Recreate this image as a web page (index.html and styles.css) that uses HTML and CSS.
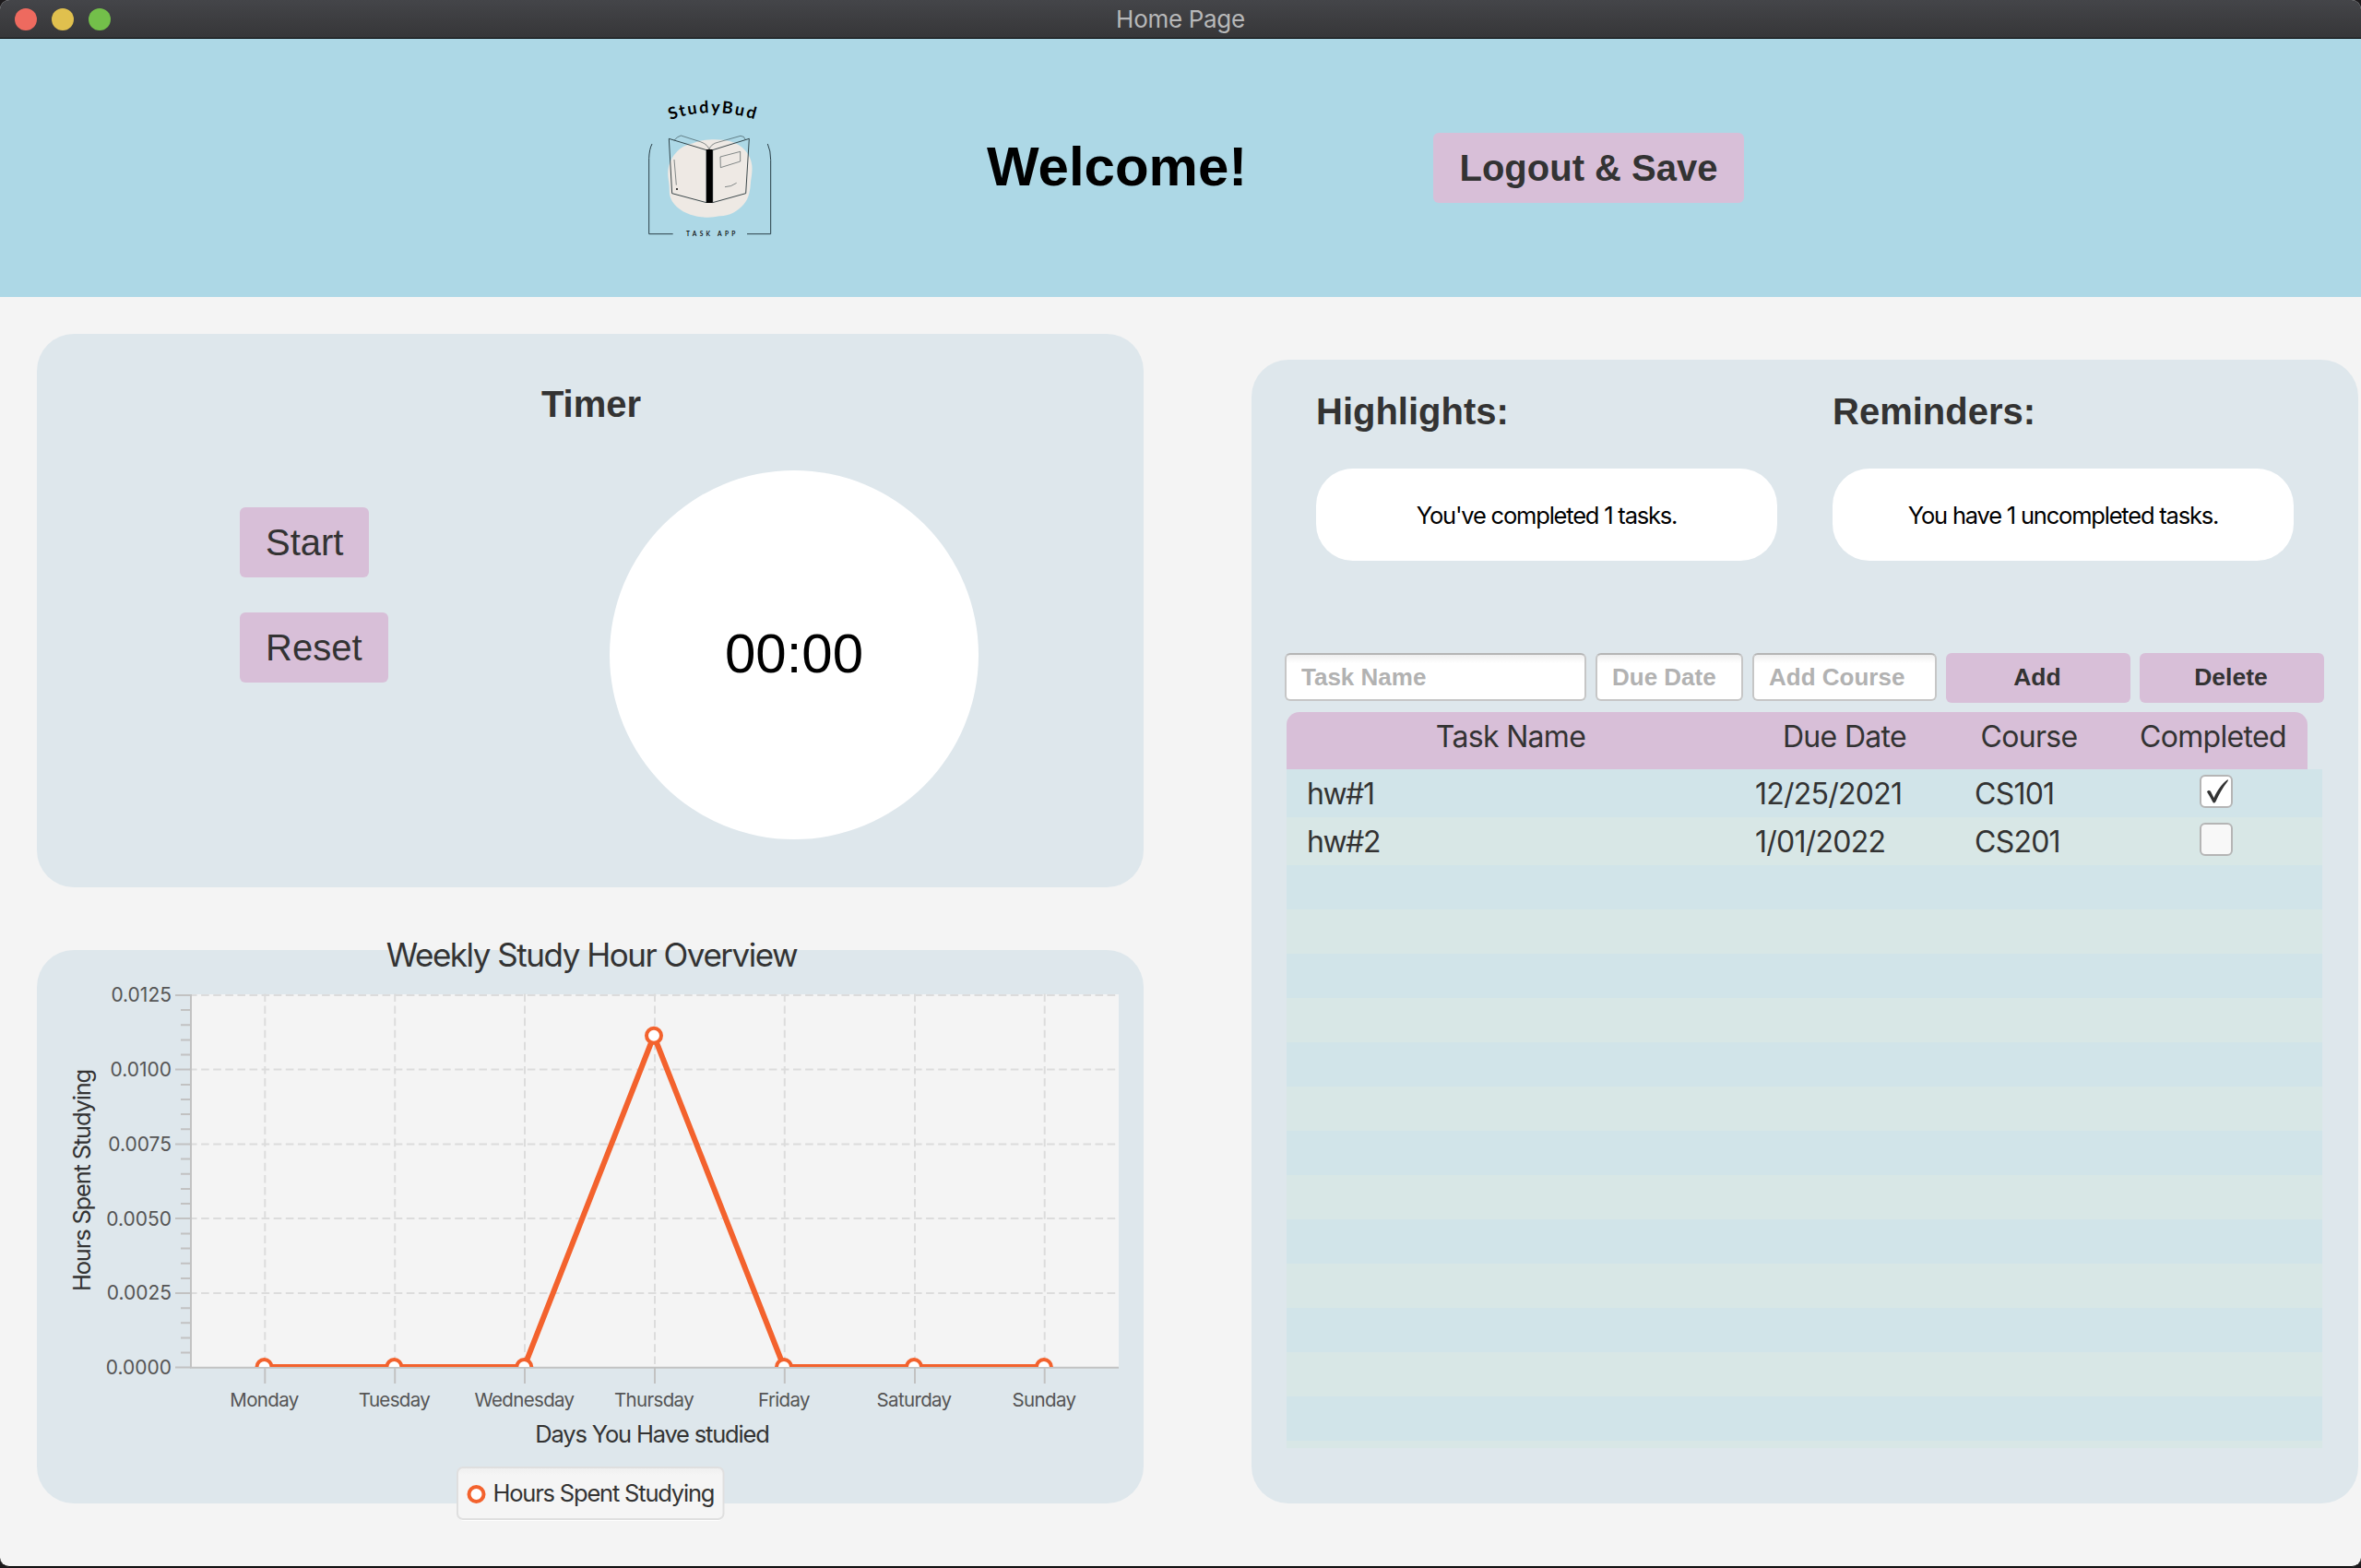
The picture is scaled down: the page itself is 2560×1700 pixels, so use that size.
FILE: index.html
```html
<!DOCTYPE html>
<html lang="en">
<head>
<meta charset="utf-8">
<title>Home Page</title>
<link rel="stylesheet" href="styles.css">
</head>
<body>
<div class="window">
  <div class="titlebar">
    <div class="lights"><span class="light close"></span><span class="light minimize"></span><span class="light zoom"></span></div>
    <div class="window-title">Home Page</div>
  </div>

  <header class="header">
    <svg class="logo" viewBox="0 6 540 540" role="img" aria-label="StudyBud Task App">
      <path class="blob" d="M215 196C240 182 305 180 336 190C376 202 402 232 406 268C408 290 404 306 402 322C400 348 398 372 380 394C360 418 330 434 300 433C272 440 236 438 206 428C172 416 144 394 138 362C137 344 138 338 134 312C129 280 138 250 158 228C174 208 192 202 215 196Z"/>
      <g class="frame">
        <path d="M81 198Q72 215 71 245V491H149"/>
        <path d="M457 198Q467 220 467 250V491H390"/>
      </g>
      <g class="book">
        <path d="M136 181L258 218V389L146 359Z"/>
        <path d="M397 181L278 218V389L386 359Z"/>
      </g>
      <g class="pages">
        <path d="M153 187Q162 174 175 171L238 191Q264 200 267 218Q270 198 298 192L369 172Q382 173 384 183"/>
        <path d="M153 249L160 332M303 240L368 223V255L304 275ZM318 338Q338 338 356 325"/>
      </g>
      <rect x="258" y="216" width="20" height="174"/>
      <circle cx="162" cy="345" r="3"/>
      <path id="arc" d="M140 120Q276 71 430 123" fill="none"/>
      <text class="logo-name"><textPath href="#arc" textLength="279">StudyBud</textPath></text>
      <text class="logo-tag" x="192" y="498" textLength="160">TASK APP</text>
    </svg>
    <h1 class="welcome">Welcome!</h1>
    <button class="btn btn-large btn-bold">Logout &amp; Save</button>
  </header>

  <main class="main">
    <div class="left">
      <section class="panel timer">
        <h2 class="heading">Timer</h2>
        <div class="timer-body">
          <div class="timer-actions">
            <button class="btn btn-large">Start</button>
            <button class="btn btn-large">Reset</button>
          </div>
          <div class="clock">00:00</div>
        </div>
      </section>

      <section class="panel">
        <svg class="chart" viewBox="40 1030 1200 600">
          <defs><clipPath id="plot"><rect x="207" y="1078" width="1006" height="404"/></clipPath>
          <linearGradient id="legendFill" x1="0" y1="0" x2="0" y2="1"><stop offset="0" stop-color="#efefef"/><stop offset=".15" stop-color="#f5f5f5"/></linearGradient></defs>
          <text class="chart-title" x="641.5" y="1048">Weekly Study Hour Overview</text>
          <rect class="plot-bg" x="207" y="1078" width="1006" height="405"/>
          <g class="grid">
            <path d="M205 1079H1213M205 1159.5H1213M205 1240.5H1213M205 1321H1213M205 1402H1213"/>
            <path d="M287.3 1077.4V1482M428.2 1077.4V1482M569 1077.4V1482M710 1077.4V1482M850.8 1077.4V1482M992 1077.4V1482M1132.7 1077.4V1482"/>
          </g>
          <g class="axis">
            <path d="M207 1078V1483M190 1079H207M190 1159.5H207M190 1240.5H207M190 1321H207M190 1402H207M190 1482.6H207"/>
            <path d="M196 1095H207M196 1111.2H207M196 1127.4H207M196 1143.5H207M196 1176H207M196 1192H207M196 1208H207M196 1224.3H207M196 1256.6H207M196 1272.7H207M196 1288.9H207M196 1305H207M196 1337.4H207M196 1353.6H207M196 1369.7H207M196 1385.9H207M196 1418.2H207M196 1434.3H207M196 1450.5H207M196 1466.6H207"/>
            <path d="M206 1482.7H1213"/>
            <path d="M287.3 1483V1500M428.2 1483V1500M569 1483V1500M710 1483V1500M850.8 1483V1500M992 1483V1500M1132.7 1483V1500"/>
          </g>
          <g clip-path="url(#plot)">
            <path class="series" d="M286.5 1482H568.3L709 1122.8L850 1482H1131.9"/>
            <g class="dots">
              <circle cx="286.5" cy="1482" r="8"/><circle cx="427.4" cy="1482" r="8"/><circle cx="568.3" cy="1482" r="8"/><circle cx="709" cy="1122.8" r="8"/><circle cx="850" cy="1482" r="8"/><circle cx="991" cy="1482" r="8"/><circle cx="1131.9" cy="1482" r="8"/>
            </g>
          </g>
          <g class="tick-y">
            <text x="186" y="1086">0.0125</text><text x="186" y="1167">0.0100</text><text x="186" y="1248">0.0075</text><text x="186" y="1329">0.0050</text><text x="186" y="1409">0.0025</text><text x="186" y="1490">0.0000</text>
          </g>
          <g class="tick-x">
            <text x="286.5" y="1525.3">Monday</text><text x="427.5" y="1525.3">Tuesday</text><text x="568.5" y="1525.3">Wednesday</text><text x="709" y="1525.3">Thursday</text><text x="850" y="1525.3">Friday</text><text x="991" y="1525.3">Saturday</text><text x="1132" y="1525.3">Sunday</text>
          </g>
          <text class="axis-label" x="707" y="1563.7">Days You Have studied</text>
          <text class="axis-label" transform="translate(98 1280) rotate(-90)">Hours Spent Studying</text>
          <rect class="legend-glow" x="496" y="1592" width="289" height="57" rx="7"/>
          <rect class="legend" x="496" y="1591" width="288.500" height="56" rx="6"/>
          <g class="dots"><circle cx="516.5" cy="1620" r="8"/></g>
          <text class="legend-text" x="534.5" y="1628">Hours Spent Studying</text>
        </svg>
      </section>
    </div>

    <section class="panel tasks">
      <div class="stats">
        <div class="stat"><h2 class="heading">Highlights:</h2><div class="pill">You've completed 1 tasks.</div></div>
        <div class="stat"><h2 class="heading">Reminders:</h2><div class="pill">You have 1 uncompleted tasks.</div></div>
      </div>
      <form class="task-form">
        <input class="field" type="text" placeholder="Task Name">
        <input class="field" type="text" placeholder="Due Date">
        <input class="field" type="text" placeholder="Add Course">
        <button class="btn btn-small" type="button">Add</button>
        <button class="btn btn-small" type="button">Delete</button>
      </form>
      <div class="table">
        <div class="thead"><span>Task Name</span><span>Due Date</span><span>Course</span><span>Completed</span></div>
        <div class="tbody">
          <div class="row filled"><span class="name">hw#1</span><span>12/25/2021</span><span>CS101</span><span class="check checked"><svg viewBox="0 0 36 36"><path d="M8 18.500C9 16.500 11 16.500 12 18L15.500 25C19 17 24 10 30 5.500C31 5 31.200 6 30.500 7C25 14 21 21 17.500 29C16 31 15 31 14 29C12 25 10 22 8 18.500Z"/></svg></span></div>
          <div class="row filled"><span class="name">hw#2</span><span>1/01/2022</span><span>CS201</span><span class="check"></span></div>
          <div class="row"></div><div class="row"></div><div class="row"></div><div class="row"></div><div class="row"></div><div class="row"></div><div class="row"></div><div class="row"></div><div class="row"></div><div class="row"></div><div class="row"></div><div class="row"></div><div class="row"></div><div class="row"></div>
        </div>
      </div>
    </section>
  </main>
</div>
</body>
</html>
```
FILE: styles.css
```css
* { box-sizing: border-box; }
body {
  margin: 0;
  height: 1700px;
  overflow: hidden;
  background: #1c1a1c;
  color: #333;
  font-family: "Liberation Sans", Arial, sans-serif;
}
h1, h2 { margin: 0; }
button, input { font-family: inherit; }

.window {
  height: 1699px;
  border-bottom: 1px solid #000;
  border-radius: 10px;
  overflow: hidden;
  background: #f4f4f4;
  display: flex;
  flex-direction: column;
}

/* Title bar */
.titlebar {
  height: 42px;
  flex: none;
  display: grid;
  grid-template-columns: 1fr auto 1fr;
  align-items: center;
  padding: 0 16px;
  background: linear-gradient(#444549, #363638);
  border-bottom: 1px solid #000;
}
.lights { display: flex; gap: 16px; }
.light { width: 24px; height: 24px; border-radius: 50%; }
.close { background: #ee6a5f; }
.minimize { background: #e0c04e; }
.zoom { background: #73bf4a; }
.window-title { font: 26px Inter, sans-serif; letter-spacing: -.3px; color: #b7b8b9; }

/* Header */
.header {
  height: 280px;
  flex: none;
  display: grid;
  grid-template-columns: 390px 484px 337px;
  align-items: center;
  padding-left: 680px;
  background: #add8e6;
}
.logo { width: 180px; height: 180px; display: block; }
.blob { fill: #eee9e4; }
.frame, .book, .pages { fill: none; stroke: #17262b; stroke-width: 2.5; }
.pages { stroke-width: 1.5; }
.frame { stroke: #2a3f48; stroke-width: 3; }
.logo-name { font: 700 54px Lato, sans-serif; }
.logo-tag { font: 600 20px Lato, sans-serif; }
.welcome { padding-bottom: 2px; font-size: 60px; line-height: 1; color: #000; }

.btn {
  border: 0;
  padding: 0;
  border-radius: 6px;
  background: #d8bfd8;
  color: #333;
  text-align: center;
}
.btn-large { height: 76px; padding: 0 28px; font-size: 40px; }
.btn-bold { padding-top: 1px; font-weight: 700; }
.btn-small { padding: 0 2px 1px 0; font-size: 26.5px; font-weight: 700; }

/* Content */
.main {
  display: grid;
  grid-template-columns: 1200px 1200px;
  column-gap: 117px;
  padding: 40px 0 0 40px;
}
.left { display: flex; flex-direction: column; gap: 68px; }
.panel { height: 600px; border-radius: 40px; background: #dee7ec; }
.heading { font-size: 40px; line-height: 46px; }

.timer { padding-top: 53px; }
.timer .heading { text-align: center; padding-left: 2px; }
.timer-body { display: flex; padding: 49px 179px 0 220px; justify-content: space-between; }
.timer-actions { display: flex; flex-direction: column; align-items: flex-start; gap: 38px; padding-top: 40px; }
.clock {
  width: 400px;
  height: 400px;
  border-radius: 50%;
  background: #fff;
  color: #000;
  font-size: 60px;
  line-height: 398px;
  text-align: center;
}

/* Chart */
.chart { display: block; width: 1200px; height: 600px; overflow: visible; font-family: Inter, sans-serif; fill: #333; }
.chart-title { font-size: 35px; letter-spacing: -1.47px; text-anchor: middle; }
.plot-bg { fill: #f4f4f4; }
.grid { fill: none; stroke: #dcdcdc; stroke-width: 2; stroke-dasharray: 8.6 4.5; }
.axis { fill: none; stroke: #c2c2c2; stroke-width: 2; }
.series { fill: none; stroke: #f3622d; stroke-width: 6; stroke-linejoin: bevel; }
.dots { fill: #fff; stroke: #f3622d; stroke-width: 4; }
.tick-y { font-size: 21px; text-anchor: end; fill: #555; }
.tick-x { font-size: 20.5px; letter-spacing: -.65px; text-anchor: middle; fill: #555; }
.axis-label { font-size: 25.5px; letter-spacing: -1.18px; text-anchor: middle; }
.legend { fill: url(#legendFill); stroke: #dfdfdf; stroke-width: 2; }
.legend-glow { fill: #fff; }
.legend-text { font-size: 25.5px; letter-spacing: -1.2px; }

/* Tasks */
.tasks { height: 1240px; margin-top: 28px; padding-top: 33px; }
.stats { display: grid; grid-template-columns: 500px 500px; gap: 60px; padding-left: 70px; }
.pill {
  margin-top: 39px;
  height: 100px;
  border-radius: 40px;
  background: #fff;
  color: #000;
  font: 25.5px/102px Inter, sans-serif;
  letter-spacing: -1.2px;
  text-align: center;
}
.task-form {
  display: grid;
  grid-template-columns: 327px 160px 200px 200px 200px;
  gap: 10px;
  padding: 100px 0 0 36px;
}
.field {
  width: 100%;
  height: 52px;
  padding: 1px 16px;
  border: 2px solid #c6c6c6;
  border-top-color: #b5b5b5;
  border-radius: 6px;
  background: linear-gradient(#efefef, #fff 9px);
  font-size: 26px;
  font-weight: 700;
}
.field::placeholder { color: #b2b2b2; opacity: 1; }
.btn-small { height: 54px; }

.table { margin: 10px 0 0 38px; width: 1123px; font: 32px Inter, sans-serif; }
.thead, .row { display: grid; grid-template-columns: 486px 238px 162px 237px; align-items: center; }
.thead {
  width: 1107px;
  height: 62px;
  padding-bottom: 9px;
  border-radius: 14px 14px 0 0;
  background: #d8bfd8;
  text-align: center;
  letter-spacing: -.68px;
}
.tbody { height: 736px; overflow: hidden; }
.row { height: 48px; background: #d8e7e6; letter-spacing: -.75px; }
.row:nth-child(odd) { background: #d1e4e9; }
.filled { height: 52px; }
.filled span:not(.check) { padding-left: 22px; }
.name { letter-spacing: -1.5px; }
.check {
  width: 36px;
  height: 36px;
  margin: -4px auto 0 104px;
  border: 2px solid #b5b5b5;
  border-radius: 6px;
  background: #f8f8f8;
}
.checked { background: #fff; }
.check svg { display: block; width: 36px; height: 36px; margin: -2px; fill: #333; }
```
